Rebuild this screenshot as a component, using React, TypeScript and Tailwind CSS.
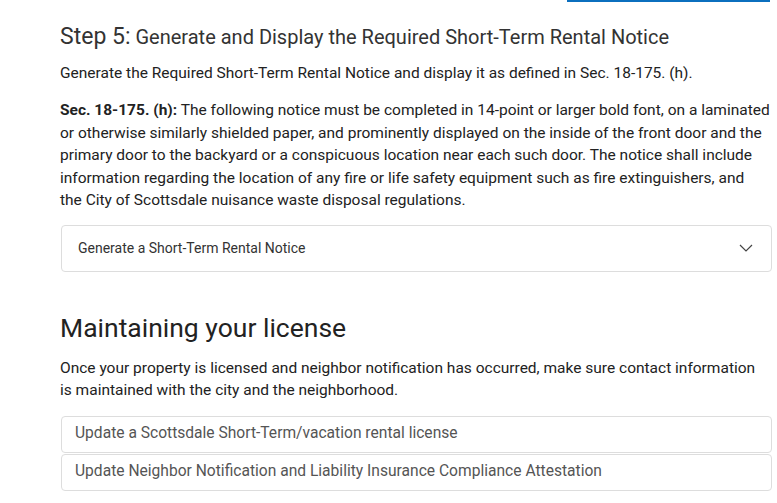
import React from "react";

export default function App() {
  return (
    <div className="w-[777px] h-[503px] bg-white overflow-hidden relative" style={{ fontFamily: "Roboto, 'Liberation Sans', sans-serif" }}>
      <div className="absolute top-0 left-[567px] w-[203px] h-[2px] bg-[#0b6fbe]" />
      <div className="pl-[60px] pt-[23px] w-[777px]">
        <h2 className="text-[20px] leading-[28px] text-[#333] font-normal">
          <span className="text-[23px]">Step 5:</span> Generate and Display the Required Short-Term Rental Notice
        </h2>
        <p className="mt-[11px] text-[15.5px] leading-[22px] text-[#222]">
          Generate the Required Short-Term Rental Notice and display it as defined in Sec. 18-175. (h).
        </p>
        <p className="mt-[15px] text-[15.5px] leading-[22.5px] text-[#222] whitespace-nowrap">
          <b className="font-bold">Sec. 18-175. (h):</b> The following notice must be completed in 14-point or larger bold font, on a laminated
          <br />or otherwise similarly shielded paper, and prominently displayed on the inside of the front door and the
          <br />primary door to the backyard or a conspicuous location near each such door. The notice shall include
          <br />information regarding the location of any fire or life safety equipment such as fire extinguishers, and
          <br />the City of Scottsdale nuisance waste disposal regulations.
        </p>
        <div className="mt-[13px] ml-px w-[711px] h-[47px] border border-[#dddddd] rounded-[4px] flex items-center justify-between pl-[16px] pr-[18px]">
          <span className="text-[14px] text-[#333]">Generate a Short-Term Rental Notice</span>
          <svg width="14" height="8" viewBox="0 0 14 8" fill="none" stroke="#444" strokeWidth="1.2"><path d="M1 1l6 6 6-6" /></svg>
        </div>
        <h2 className="mt-[40px] text-[26.5px] leading-[32px] text-[#222] font-normal">Maintaining your license</h2>
        <p className="mt-[13px] text-[15.5px] leading-[22px] text-[#222] whitespace-nowrap">
          Once your property is licensed and neighbor notification has occurred, make sure contact information
          <br />is maintained with the city and the neighborhood.
        </p>
        <div className="mt-[15px] ml-px w-[711px] flex flex-col gap-px">
          <div className="h-[37px] border border-[#dddddd] rounded-[4px] flex items-center pl-[13px] text-[15.6px] text-[#555]">Update a Scottsdale Short-Term/vacation rental license</div>
          <div className="h-[37px] border border-[#dddddd] rounded-[4px] flex items-center pl-[13px] text-[15.6px] text-[#555]">Update Neighbor Notification and Liability Insurance Compliance Attestation</div>
        </div>
      </div>
    </div>
  );
}
